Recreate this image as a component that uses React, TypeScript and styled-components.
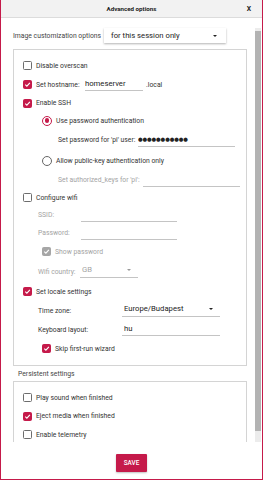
import React from "react";
import styled, { createGlobalStyle } from "styled-components";

const Global = createGlobalStyle`
  html, body {
    margin: 0;
    padding: 0;
    background: #c51a4a;
  }
  body {
    font-family: Roboto, "Liberation Sans", sans-serif;
    color: #333;
  }
  * { box-sizing: border-box; }
`;

const Dialog = styled.div`
  width: 261px;
  height: 479px;
  margin-left: 1px;
  background: #fff;
  display: flex;
  flex-direction: column;
`;

const TitleBar = styled.div`
  height: 18px;
  flex-shrink: 0;
  background: #f2f2f2;
  border-bottom: 1px solid #dcdcdc;
  display: grid;
  grid-template-columns: 1fr auto 1fr;
  align-items: center;
  font-size: 6.2px;
  font-weight: 700;
  color: #222;
  .close {
    justify-self: end;
    padding-right: 11px;
    font-size: 6.8px;
  }
`;

const Body = styled.div`
  flex: 1;
  min-height: 0;
  display: flex;
`;

const Content = styled.div`
  width: 254px;
  flex-shrink: 0;
  overflow: hidden;
  padding: 10px 8px 4px 12px;
`;

const ScrollTrack = styled.div`
  width: 6px;
  margin-top: 10px;
  background: #ececec;
  display: flex;
  flex-direction: column;
  padding: 3px 0 11px;
`;

const ScrollThumb = styled.div`
  flex: 1;
  background: #b3b3b3;
`;

const TopRow = styled.div`
  display: flex;
  align-items: center;
  height: 15px;
  font-size: 6.8px;
  color: #444;
  gap: 3px;
`;

const Dropdown = styled.div`
  width: 122px;
  height: 15px;
  background: #fff;
  box-shadow: 0 1px 2px rgba(0, 0, 0, 0.3);
  display: flex;
  align-items: center;
  padding: 0 9px 0 7px;
  font-size: 7.7px;
  color: #222;
  justify-content: space-between;
`;

const Arrow = styled.span<{ $muted?: boolean }>`
  width: 0;
  height: 0;
  border-left: 2px solid transparent;
  border-right: 2px solid transparent;
  border-top: 2.5px solid ${(p) => (p.$muted ? "#999" : "#222")};
`;

const Group = styled.div<{ $top?: number }>`
  border: 1px solid #d4d4d4;
  margin-top: ${(p) => p.$top ?? 0}px;
  padding: 6px 0 7px 9px;
`;

const Row = styled.div<{ $h: number; $indent?: number }>`
  display: flex;
  align-items: center;
  height: ${(p) => p.$h}px;
  padding-left: ${(p) => p.$indent ?? 0}px;
`;

const Text = styled.span<{ $muted?: boolean; $w?: number }>`
  font-size: 6.8px;
  color: ${(p) => (p.$muted ? "#a3a3a3" : "#333")};
  width: ${(p) => (p.$w ? `${p.$w}px` : "auto")};
  flex-shrink: 0;
  white-space: nowrap;
`;

const Box = styled.span<{ $checked?: boolean; $disabled?: boolean }>`
  width: 9px;
  height: 9px;
  border-radius: 1.5px;
  margin-right: 4px;
  flex-shrink: 0;
  display: flex;
  align-items: center;
  justify-content: center;
  background: ${(p) =>
    p.$checked ? (p.$disabled ? "#a6a6a6" : "#c51a4a") : "#fff"};
  border: 1.2px solid
    ${(p) => (p.$checked ? (p.$disabled ? "#a6a6a6" : "#c51a4a") : "#6d6d6d")};
`;

const Radio = styled.span<{ $checked?: boolean }>`
  width: 10px;
  height: 10px;
  border-radius: 50%;
  margin-right: 4px;
  flex-shrink: 0;
  border: 1.2px solid ${(p) => (p.$checked ? "#c51a4a" : "#666")};
  display: flex;
  align-items: center;
  justify-content: center;
  &::after {
    content: "";
    width: 4.5px;
    height: 4.5px;
    border-radius: 50%;
    background: ${(p) => (p.$checked ? "#c51a4a" : "transparent")};
  }
`;

const Field = styled.input<{ $w: number; $dots?: boolean }>`
  width: ${(p) => p.$w}px;
  height: 13px;
  border: none;
  border-bottom: 1px solid #c4c4c4;
  outline: none;
  background: transparent;
  padding: 0 0 2px 0;
  font-family: ${(p) =>
    p.$dots ? `"DejaVu Sans", sans-serif` : `Roboto, "Liberation Sans", sans-serif`};
  font-size: ${(p) => (p.$dots ? "5.3px" : "7.7px")};
  letter-spacing: ${(p) => (p.$dots ? "-0.1px" : "normal")};
  color: #222;
  flex-shrink: 0;
`;

const Combo = styled.div<{ $w: number; $muted?: boolean }>`
  width: ${(p) => p.$w}px;
  height: 13px;
  border-bottom: 1px solid #c4c4c4;
  display: flex;
  align-items: flex-start;
  justify-content: space-between;
  padding: 0 7px 0 2px;
  font-size: 7.7px;
  color: ${(p) => (p.$muted ? "#a3a3a3" : "#222")};
  span:last-child {
    margin-top: 4px;
  }
`;

const Section = styled.div`
  height: 15px;
  display: flex;
  align-items: center;
  padding-left: 5px;
  font-size: 6.8px;
  color: #444;
`;

const Footer = styled.div`
  height: 37px;
  flex-shrink: 0;
  display: flex;
  justify-content: center;
  padding-top: 12px;
`;

const SaveButton = styled.button`
  width: 31px;
  height: 18px;
  border: none;
  border-radius: 1px;
  background: #c51a4a;
  color: #fff;
  font-family: Roboto, "Liberation Sans", sans-serif;
  font-size: 6.4px;
  font-weight: 500;
  padding: 0;
  box-shadow: 0 1px 2px rgba(0, 0, 0, 0.25);
`;

function Check({ checked, disabled }: { checked?: boolean; disabled?: boolean }) {
  return (
    <Box $checked={checked} $disabled={disabled}>
      {checked && (
        <svg width="7" height="7" viewBox="0 0 10 10">
          <polyline
            points="1.8,5.2 4.1,7.4 8.4,2.6"
            fill="none"
            stroke="#fff"
            strokeWidth="1.6"
          />
        </svg>
      )}
    </Box>
  );
}

export default function App() {
  return (
    <>
      <Global />
      <Dialog>
        <TitleBar>
          <span />
          <span>Advanced options</span>
          <span className="close">X</span>
        </TitleBar>
        <Body>
          <Content>
            <TopRow>
              Image customization options
              <Dropdown>
                for this session only
                <Arrow />
              </Dropdown>
            </TopRow>

            <Group $top={6}>
              <Row $h={19}>
                <Check />
                <Text>Disable overscan</Text>
              </Row>
              <Row $h={19}>
                <Check checked />
                <Text $w={49}>Set hostname:</Text>
                <Field $w={58} defaultValue="homeserver" readOnly />
                <Text style={{ marginLeft: 3 }}>.local</Text>
              </Row>
              <Row $h={18}>
                <Check checked />
                <Text>Enable SSH</Text>
              </Row>
              <Row $h={17} $indent={19}>
                <Radio $checked />
                <Text>Use password authentication</Text>
              </Row>
              <Row $h={22} $indent={35}>
                <Text $w={80}>Set password for 'pi' user:</Text>
                <Field $w={97} $dots defaultValue="●●●●●●●●●●●" readOnly />
              </Row>
              <Row $h={20} $indent={19}>
                <Radio />
                <Text>Allow public-key authentication only</Text>
              </Row>
              <Row $h={18} $indent={35}>
                <Text $muted $w={85}>Set authorized_keys for 'pi':</Text>
                <Field $w={97} readOnly />
              </Row>
              <Row $h={17}>
                <Check />
                <Text>Configure wifi</Text>
              </Row>
              <Row $h={18} $indent={15}>
                <Text $muted $w={43}>SSID:</Text>
                <Field $w={96} readOnly />
              </Row>
              <Row $h={18} $indent={15}>
                <Text $muted $w={43}>Password:</Text>
                <Field $w={96} readOnly />
              </Row>
              <Row $h={19} $indent={19}>
                <Check checked disabled />
                <Text $muted>Show password</Text>
              </Row>
              <Row $h={21} $indent={15}>
                <Text $muted $w={42}>Wifi country:</Text>
                <Combo $w={58} $muted>
                  <span>GB</span>
                  <Arrow $muted />
                </Combo>
              </Row>
              <Row $h={19}>
                <Check checked />
                <Text>Set locale settings</Text>
              </Row>
              <Row $h={19} $indent={15}>
                <Text $w={84}>Time zone:</Text>
                <Combo $w={98}>
                  <span>Europe/Budapest</span>
                  <Arrow />
                </Combo>
              </Row>
              <Row $h={19} $indent={15}>
                <Text $w={84}>Keyboard layout:</Text>
                <Field $w={98} defaultValue="hu" readOnly style={{ paddingLeft: 2 }} />
              </Row>
              <Row $h={19} $indent={19}>
                <Check checked />
                <Text>Skip first-run wizard</Text>
              </Row>
            </Group>

            <Section>Persistent settings</Section>

            <Group>
              <Row $h={19}>
                <Check />
                <Text>Play sound when finished</Text>
              </Row>
              <Row $h={18}>
                <Check checked />
                <Text>Eject media when finished</Text>
              </Row>
              <Row $h={19}>
                <Check />
                <Text>Enable telemetry</Text>
              </Row>
            </Group>
          </Content>
          <ScrollTrack>
            <ScrollThumb />
          </ScrollTrack>
        </Body>
        <Footer>
          <SaveButton>SAVE</SaveButton>
        </Footer>
      </Dialog>
    </>
  );
}
